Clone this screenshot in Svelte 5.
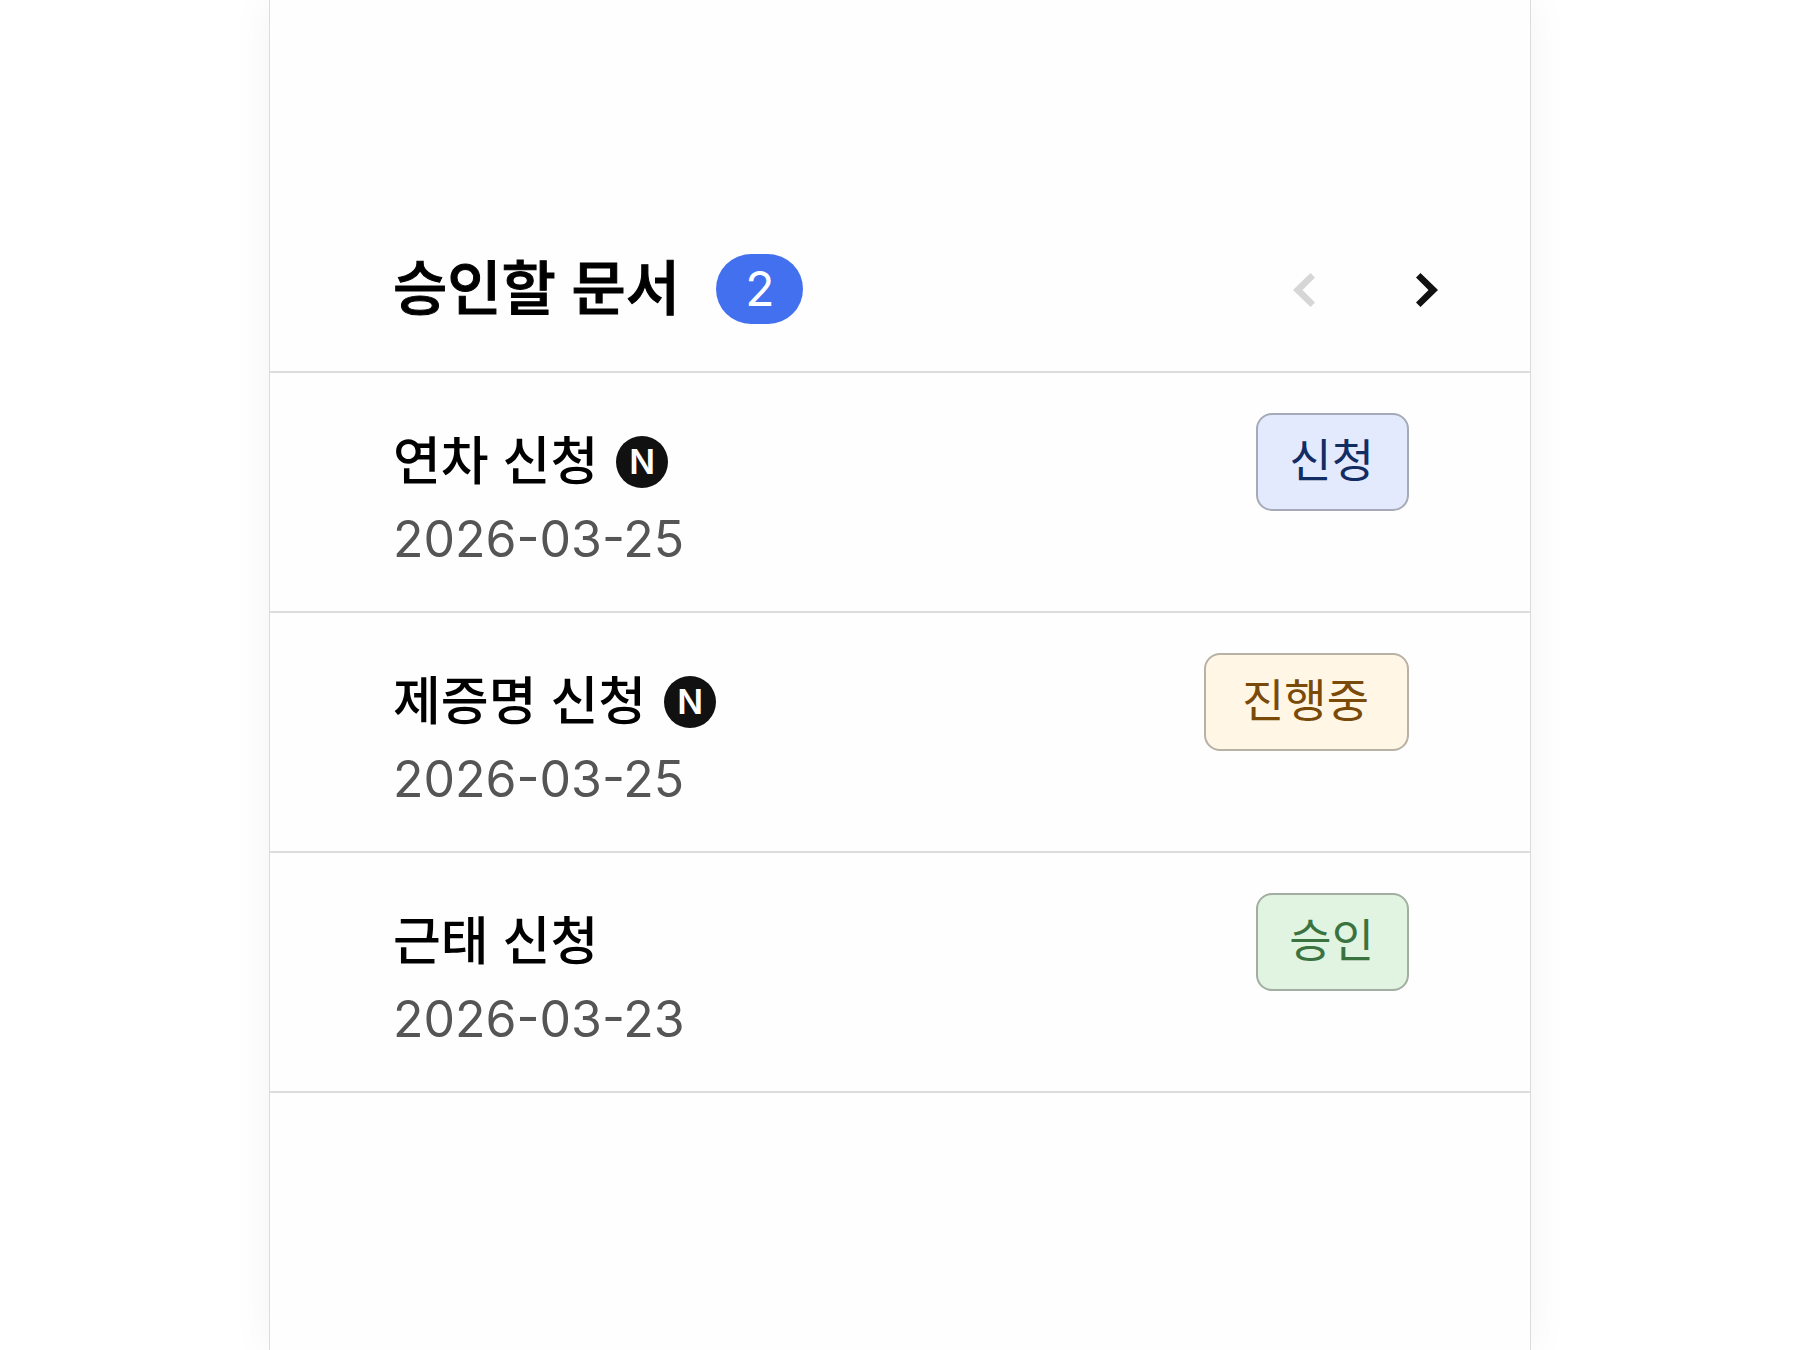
<script lang="ts">
	type Status = 'requested' | 'progress' | 'approved';

	type Doc = {
		title: string;
		date: string;
		status: Status;
		isNew: boolean;
	};

	const statusLabels: Record<Status, string> = {
		requested: '신청',
		progress: '진행중',
		approved: '승인'
	};

	const docs: Doc[] = [
		{ title: '연차 신청', date: '2026-03-25', status: 'requested', isNew: true },
		{ title: '제증명 신청', date: '2026-03-25', status: 'progress', isNew: true },
		{ title: '근태 신청', date: '2026-03-23', status: 'approved', isNew: false }
	];

	const pendingCount = 2;
	const pageCount = 2;

	let page = $state(0);
</script>

<section class="panel" aria-labelledby="panel-heading">
	<header class="panel-header">
		<h2 id="panel-heading">승인할 문서</h2>
		<span class="count">{pendingCount}</span>
		<nav class="pager">
			<button type="button" aria-label="이전" disabled={page === 0} onclick={() => page--}>
				<svg viewBox="0 0 64 64" aria-hidden="true">
					<path d="M38.5 16 43 20.5 30.5 33 43 45.5 38.5 50 21 33Z" />
				</svg>
			</button>
			<button type="button" aria-label="다음" disabled={page === pageCount - 1} onclick={() => page++}>
				<svg viewBox="0 0 64 64" aria-hidden="true">
					<path d="M25.5 16 21 20.5 33.5 33 21 45.5 25.5 50 43 33Z" />
				</svg>
			</button>
		</nav>
	</header>

	<ul class="doc-list">
		{#each docs as doc}
			<li class="doc">
				<div class="doc-body">
					<div class="doc-title">
						<span>{doc.title}</span>
						{#if doc.isNew}<span class="new-mark">N</span>{/if}
					</div>
					<time class="doc-date" datetime={doc.date}>{doc.date}</time>
				</div>
				<span class="badge {doc.status}">{statusLabels[doc.status]}</span>
			</li>
		{/each}
	</ul>
</section>

<style>
	:global(body) {
		margin: 0;
		background: #fff;
		font-family: Inter, 'Noto Sans CJK KR', sans-serif;
	}

	.panel {
		box-sizing: border-box;
		max-width: 1262px;
		min-height: 100vh;
		margin: 0 auto;
		padding-top: 206px;
		border: solid #dcdcdc;
		border-width: 0 1px;
		background: #fefefe;
		box-shadow: 0 0 40px rgba(0, 0, 0, 0.05);
	}

	.panel-header {
		display: flex;
		align-items: center;
		padding: 48px 71px 47px 123px;
		border-bottom: 2px solid #dcdcdc;
	}

	h2 {
		margin: 0 36px 0 0;
		font-size: 59px;
		font-weight: 500;
		line-height: 70px;
		color: #000;
		/* semibold look between the medium and bold cuts */
		-webkit-text-stroke: 1px #000;
	}

	.count {
		padding: 0 29px;
		border-radius: 35px;
		background: #4370ee;
		color: #fff;
		font-size: 48px;
		line-height: 70px;
		text-align: center;
	}

	.pager {
		display: flex;
		gap: 59px;
		margin-left: auto;
	}

	.pager button {
		padding: 0;
		border: 0;
		background: none;
		color: #111;
		cursor: pointer;
	}

	.pager button:disabled {
		color: #d6d6d6;
		cursor: default;
	}

	.pager svg {
		display: block;
		width: 64px;
		height: 64px;
		fill: currentColor;
	}

	.doc-list {
		list-style: none;
		margin: 0;
		padding: 0;
	}

	.doc {
		display: flex;
		justify-content: space-between;
		align-items: flex-start;
		padding: 40px 121px 34px 123px;
		border-bottom: 2px solid #dcdcdc;
	}

	.doc-body {
		padding-top: 10px;
	}

	.doc-title {
		display: flex;
		align-items: center;
		gap: 18px;
		font-size: 52px;
		font-weight: 500;
		line-height: 78px;
		color: #000;
	}

	.new-mark {
		width: 52px;
		height: 52px;
		border-radius: 50%;
		background: #111;
		color: #fff;
		font-size: 34px;
		font-weight: 600;
		line-height: 52px;
		text-align: center;
	}

	.doc-date {
		display: block;
		font-size: 50px;
		line-height: 76px;
		color: #555;
	}

	.badge {
		padding: 0 33px 4px 31px;
		border: 2px solid;
		border-radius: 16px;
		font-size: 46px;
		line-height: 90px;
	}

	.requested {
		border-color: #a6aab8;
		background: #e4eafd;
		color: #122c64;
	}

	.progress {
		padding-inline: 36px 38px;
		border-color: #b8b1a5;
		background: #fff6e5;
		color: #7a4a08;
	}

	.approved {
		border-color: #a1aea1;
		background: #e1f3e1;
		color: #3a7340;
	}
</style>
